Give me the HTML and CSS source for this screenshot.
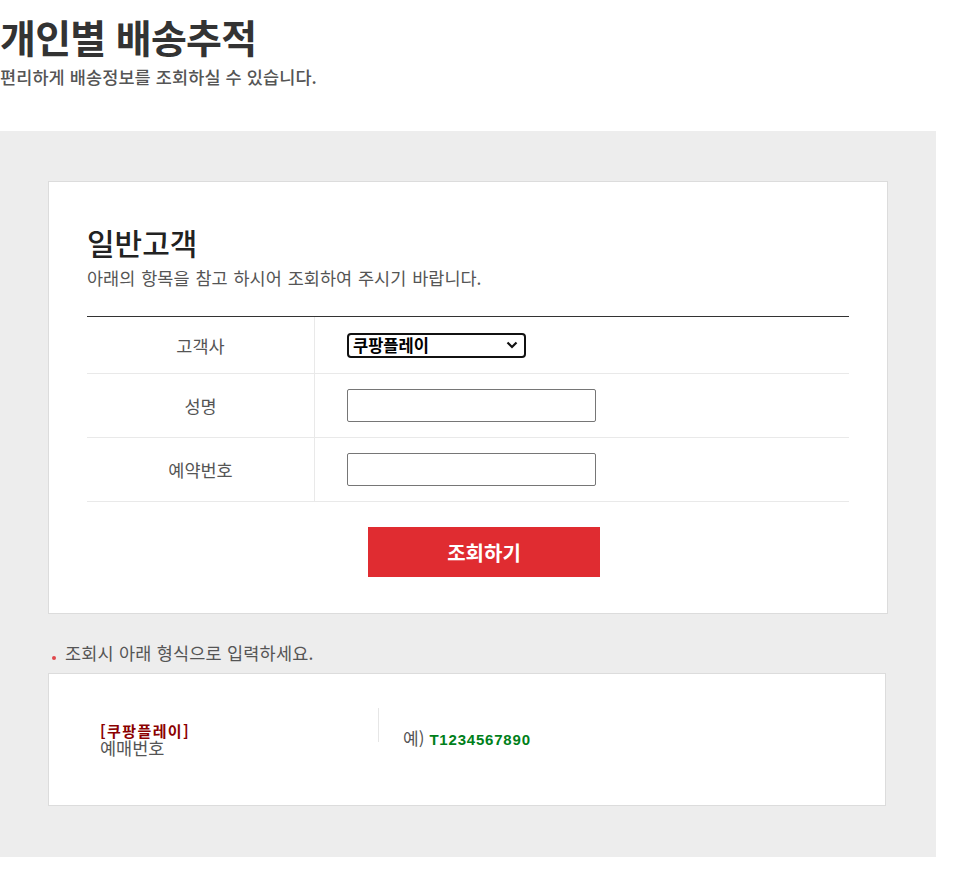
FILE: index.html
```html
<!DOCTYPE html>
<html lang="ko">
<head>
<meta charset="utf-8">
<title>개인별 배송추적</title>
<link rel="stylesheet" href="styles.css">
</head>
<body>
<header class="page-head">
  <h1 class="page-title">개인별 배송추적</h1>
  <p class="page-desc">편리하게 배송정보를 조회하실 수 있습니다.</p>
</header>
<main class="panel">
  <section class="card">
    <h2 class="card-title">일반고객</h2>
    <p class="card-desc">아래의 항목을 참고 하시어 조회하여 주시기 바랍니다.</p>
    <div class="form-table">
      <div class="row row-first">
        <div class="label">고객사</div>
        <div class="field">
          <select class="select">
            <option>쿠팡플레이</option>
          </select>
        </div>
      </div>
      <div class="row">
        <div class="label">성명</div>
        <div class="field"><input class="input" type="text"></div>
      </div>
      <div class="row">
        <div class="label">예약번호</div>
        <div class="field"><input class="input" type="text"></div>
      </div>
    </div>
    <button class="submit" type="button">조회하기</button>
  </section>
  <p class="note"><span class="dot"></span>조회시 아래 형식으로 입력하세요.</p>
  <section class="card example">
    <div class="ex-left">
      <span class="ex-brand">[쿠팡플레이]</span>
      <span class="ex-label">예매번호</span>
    </div>
    <div class="ex-divider"></div>
    <div class="ex-right">
      <span class="ex-prefix">예)</span>
      <span class="ex-value">T1234567890</span>
    </div>
  </section>
</main>
</body>
</html>
```

FILE: styles.css
```css
* { box-sizing: border-box; }
html, body { margin: 0; padding: 0; background: #fff; }
body {
  font-family: "Noto Sans CJK KR", "Noto Sans", sans-serif;
  color: #555;
}
.page-head {
  height: 131px;
  padding-top: 13px;
}
.page-title {
  margin: 0;
  font-size: 39px;
  line-height: 46px;
  font-weight: 700;
  color: #333;
  letter-spacing: -0.7px;
}
.page-desc {
  margin: 6px 0 0;
  font-size: 17.5px;
  line-height: 24px;
  font-weight: 500;
  color: #555;
  letter-spacing: 0.1px;
}
.panel {
  width: 936px;
  background: #ededed;
  padding: 50px 0 51px 48px;
}
.card {
  background: #fff;
  border: 1px solid #dcdcdc;
  width: 840px;
}
.card:first-child {
  padding: 41px 38px 36px 38px;
}
.card-title {
  margin: 0;
  font-size: 30px;
  line-height: 38px;
  font-weight: 500;
  color: #222;
}
.card-desc {
  margin: 5px 0 0;
  font-size: 17.5px;
  line-height: 24px;
  color: #555;
  word-spacing: 1px;
}
.form-table {
  margin-top: 26px;
  border-top: 1px solid #333;
}
.row {
  display: grid;
  grid-template-columns: 228px 1fr;
  height: 64px;
  border-bottom: 1px solid #e9e9e9;
}
.row-first { height: 57px; }
.label {
  display: flex;
  align-items: center;
  justify-content: center;
  border-right: 1px solid #e9e9e9;
  font-size: 17.5px;
  color: #555;
}
.field {
  display: flex;
  align-items: center;
  padding-left: 32px;
}
.select {
  appearance: none;
  -webkit-appearance: none;
  width: 179px;
  height: 25px;
  border: 2px solid #111;
  border-radius: 4px;
  background: #fff url("data:image/svg+xml;utf8,<svg xmlns='http://www.w3.org/2000/svg' width='12' height='8' viewBox='0 0 12 8'><path d='M1.5 1.5 L6 6 L10.5 1.5' fill='none' stroke='%23111' stroke-width='2.2'/></svg>") no-repeat right 6px center;
  font-family: "Noto Sans CJK KR", sans-serif;
  font-size: 16.5px;
  font-weight: 700;
  color: #000;
  padding: 0 4px;
  line-height: 20px;
}
.input {
  width: 249px;
  height: 33px;
  border: 1px solid #767676;
  border-radius: 2px;
  background: #fff;
  padding: 0 4px;
}
.submit {
  display: block;
  margin: 25px 0 0 281px;
  width: 232px;
  height: 50px;
  border: 0;
  background: #e02c31;
  color: #fff;
  font-family: "Noto Sans CJK KR", sans-serif;
  font-size: 20px;
  font-weight: 700;
  cursor: pointer;
}
.note {
  margin: 0;
  height: 59px;
  padding: 27px 0 8px;
  display: flex;
  align-items: center;
  font-size: 17.5px;
  line-height: 24px;
  color: #555;
  letter-spacing: 0.2px;
}
.note .dot {
  width: 4px;
  height: 4px;
  border-radius: 50%;
  background: #e0474c;
  margin: 9px 9px 0 4px;
}
.card.example {
  margin-top: 0;
  width: 838px;
  height: 133px;
  display: flex;
  align-items: flex-start;
  padding-left: 51px;
}
.ex-left {
  width: 278px;
  padding-top: 49px;
  display: flex;
  flex-direction: column;
}
.ex-brand {
  font-size: 15px;
  line-height: 16px;
  font-weight: 700;
  color: #8b0000;
  letter-spacing: 1.4px;
}
.ex-label {
  font-size: 17.5px;
  line-height: 18px;
  color: #555;
}
.ex-divider {
  width: 1px;
  height: 34px;
  background: #e6e6e6;
  margin-top: 34px;
}
.ex-right {
  padding: 51px 0 0 24px;
  display: flex;
  align-items: baseline;
  gap: 5px;
}
.ex-prefix {
  font-size: 17px;
  color: #555;
}
.ex-value {
  font-family: "Liberation Sans", Arial, sans-serif;
  font-size: 15px;
  font-weight: 700;
  color: #007f1a;
  letter-spacing: 0.8px;
}
```
